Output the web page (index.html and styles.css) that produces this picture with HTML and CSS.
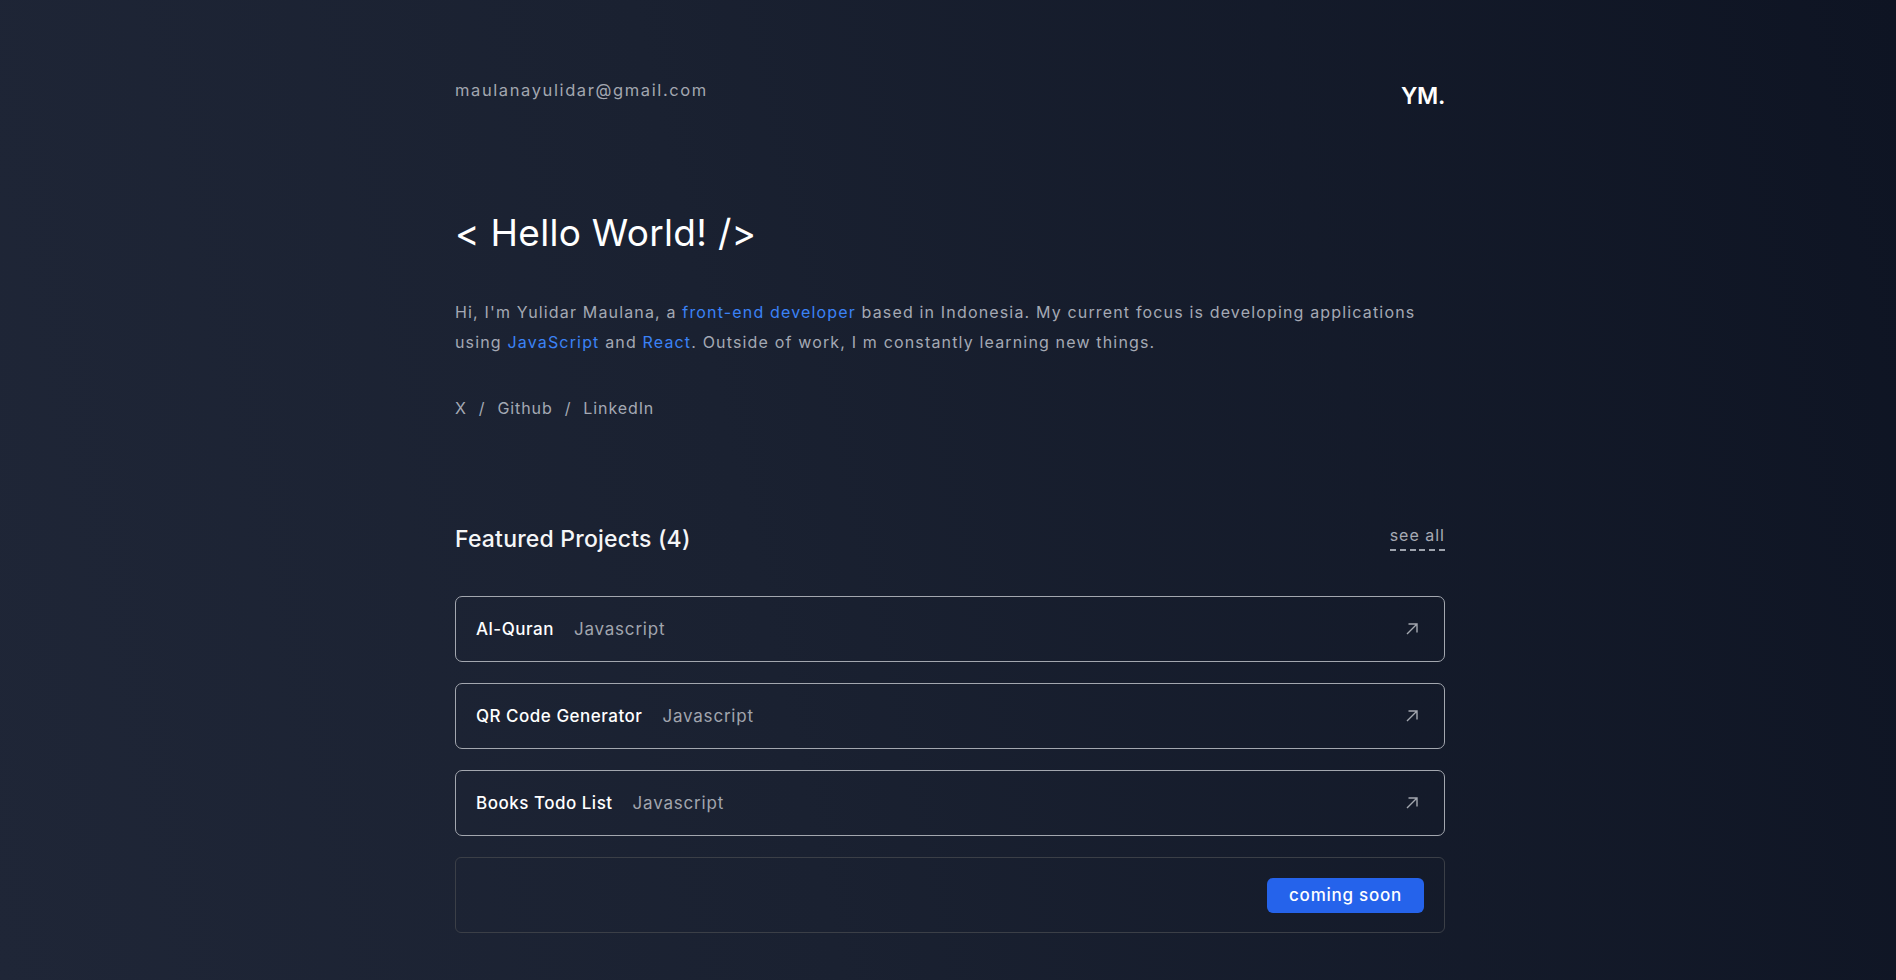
FILE: index.html
```html
<!DOCTYPE html>
<html lang="en">
<head>
<meta charset="utf-8">
<title>Yulidar Maulana</title>
<link rel="stylesheet" href="styles.css">
</head>
<body>
<main class="page">
  <header class="top">
    <a class="email" href="#">maulanayulidar@gmail.com</a>
    <span class="logo">YM.</span>
  </header>

  <section class="intro">
    <h1 class="title">&lt; Hello World! /&gt;</h1>
    <p class="bio">Hi, I'm Yulidar Maulana, a <span class="hl">front-end developer</span> based in Indonesia. My current focus is developing applications using <span class="hl">JavaScript</span> and <span class="hl">React</span>. Outside of work, I m constantly learning new things.</p>
    <nav class="socials">
      <a href="#">X</a><span class="sep">/</span><a href="#">Github</a><span class="sep">/</span><a href="#">LinkedIn</a>
    </nav>
  </section>

  <section class="projects">
    <div class="projects-head">
      <h2 class="projects-title">Featured Projects (4)</h2>
      <a class="see-all" href="#">see all</a>
    </div>
    <ul class="project-list">
      <li class="project">
        <div class="project-info"><span class="project-name">Al-Quran</span><span class="project-tech">Javascript</span></div>
        <svg class="arrow" viewBox="0 0 12 12" width="12" height="12"><path d="M1 11L11 1M2.5 1H11V9.5" fill="none" stroke="currentColor" stroke-width="1.4"/></svg>
      </li>
      <li class="project">
        <div class="project-info"><span class="project-name">QR Code Generator</span><span class="project-tech">Javascript</span></div>
        <svg class="arrow" viewBox="0 0 12 12" width="12" height="12"><path d="M1 11L11 1M2.5 1H11V9.5" fill="none" stroke="currentColor" stroke-width="1.4"/></svg>
      </li>
      <li class="project">
        <div class="project-info"><span class="project-name">Books Todo List</span><span class="project-tech">Javascript</span></div>
        <svg class="arrow" viewBox="0 0 12 12" width="12" height="12"><path d="M1 11L11 1M2.5 1H11V9.5" fill="none" stroke="currentColor" stroke-width="1.4"/></svg>
      </li>
      <li class="project project-soon">
        <span class="badge">coming soon</span>
      </li>
    </ul>
  </section>
</main>
</body>
</html>
```

FILE: styles.css
```css
* { box-sizing: border-box; }

html, body {
  margin: 0;
  padding: 0;
}

body {
  min-height: 100vh;
  background: linear-gradient(78deg, #1f2637 0%, #1a2131 40%, #0e1423 100%);
  font-family: Inter, "Noto Sans", sans-serif;
  font-size: 16px;
  color: #a1a6b1;
  letter-spacing: 0.9px;
}

a { color: inherit; text-decoration: none; }

.page {
  width: 994px;
  margin: 0 auto;
  padding: 78px 0 60px 4px;
}

.top {
  display: flex;
  justify-content: space-between;
  align-items: flex-start;
}

.email {
  font-size: 16.5px;
  line-height: 24px;
  color: #a3a7b0;
  letter-spacing: 1.6px;
}

.logo {
  font-size: 23px;
  line-height: 32px;
  font-weight: 600;
  color: #ffffff;
  letter-spacing: -0.3px;
  padding-top: 2px;
}

.title {
  margin: 98px 0 0;
  font-size: 37px;
  line-height: 45px;
  font-weight: 400;
  color: #ffffff;
  letter-spacing: 0.3px;
}

.bio {
  margin: 42px 0 0;
  line-height: 30px;
  color: #a4a9b4;
  letter-spacing: 1.16px;
}

.hl { color: #3b82f6; }

.socials {
  margin-top: 39px;
  display: flex;
  gap: 12px;
  line-height: 24px;
  color: #a4a9b4;
}

.projects { margin-top: 103px; }

.projects-head {
  display: flex;
  justify-content: space-between;
  align-items: flex-start;
}

.projects-title {
  margin: 0;
  font-size: 23px;
  line-height: 32px;
  font-weight: 500;
  color: #f5f6f8;
  letter-spacing: 0.2px;
}

.see-all {
  line-height: 24px;
  padding-bottom: 4px;
  color: #a7abb4;
  letter-spacing: 1px;
  background: repeating-linear-gradient(to right, #9ea3ad 0 6px, transparent 6px 9.8px) left bottom / 100% 2px no-repeat;
}

.project-list {
  list-style: none;
  margin: 41px 0 0;
  padding: 0;
  display: flex;
  flex-direction: column;
  gap: 21px;
}

.project {
  display: flex;
  align-items: center;
  justify-content: space-between;
  padding: 20px 26px 20px 20px;
  border: 1px solid #a3a7af;
  border-radius: 7px;
}

.project-info {
  display: flex;
  align-items: center;
  gap: 20px;
  font-size: 17px;
  line-height: 24px;
}

.project-name {
  color: #ffffff;
  font-weight: 500;
  letter-spacing: 0.5px;
}

.project-tech {
  color: #a1a5ae;
  letter-spacing: 0.8px;
}

.arrow {
  color: #a3a7af;
  display: block;
}

.project-soon {
  justify-content: flex-end;
  padding: 20px 20px 19px;
  border-color: #3b3f47;
  border-radius: 6px;
}

.badge {
  display: inline-block;
  padding: 6px 22px;
  line-height: 23px;
  font-size: 17px;
  font-weight: 500;
  color: #ffffff;
  background: #2563eb;
  border-radius: 6px;
  letter-spacing: 0.75px;
}
```
